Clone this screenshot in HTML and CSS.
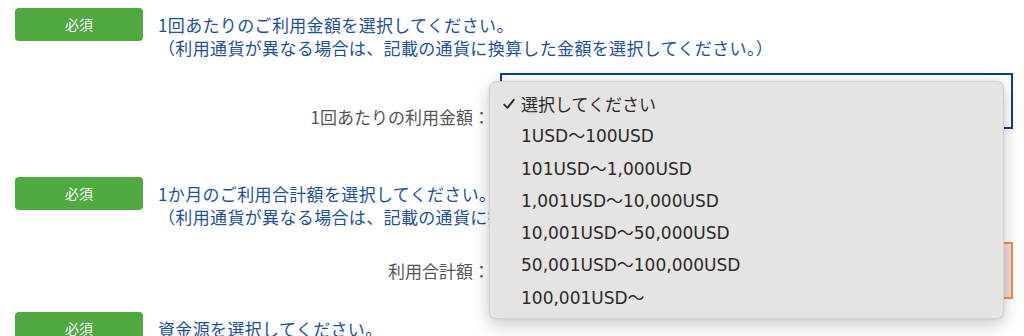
FILE: index.html
```html
<!DOCTYPE html>
<html lang="ja">
<head>
<meta charset="utf-8">
<link rel="stylesheet" href="styles.css">
</head>
<body>
<div class="page">
  <section class="q q-first">
    <div class="head">
      <span class="badge">必須</span>
      <div class="qtext">
        <p>1回あたりのご利用金額を選択してください。</p>
        <p class="note">（利用通貨が異なる場合は、記載の通貨に換算した金額を選択してください。）</p>
      </div>
    </div>
    <div class="field field-low">
      <span class="label">1回あたりの利用金額：</span>
      <div class="select select-focus"></div>
    </div>
  </section>

  <section class="q q-second">
    <div class="head">
      <span class="badge">必須</span>
      <div class="qtext">
        <p>1か月のご利用合計額を選択してください。</p>
        <p class="note">（利用通貨が異なる場合は、記載の通貨に換算した金額を選択してください。）</p>
      </div>
    </div>
    <div class="field field-mid">
      <span class="label">利用合計額：</span>
      <div class="select select-error"></div>
    </div>
  </section>

  <section class="q q-third">
    <div class="head">
      <span class="badge">必須</span>
      <div class="qtext">
        <p>資金源を選択してください。</p>
      </div>
    </div>
  </section>

  <ul class="popup">
    <li class="opt opt-checked"><svg class="check" width="12" height="12" viewBox="0 0 12 12"><path d="M1.2 6.6 L4.4 9.8 L10.8 1.8" fill="none" stroke="#2a2a2a" stroke-width="1.9" stroke-linecap="round" stroke-linejoin="round"/></svg>選択してください</li>
    <li class="opt">1USD～100USD</li>
    <li class="opt">101USD～1,000USD</li>
    <li class="opt">1,001USD～10,000USD</li>
    <li class="opt">10,001USD～50,000USD</li>
    <li class="opt">50,001USD～100,000USD</li>
    <li class="opt">100,001USD～</li>
  </ul>
</div>
</body>
</html>
```

FILE: styles.css
```css
* { box-sizing: border-box; }
html, body {
  margin: 0;
  padding: 0;
  background: #ffffff;
  height: 336px;
  overflow: hidden;
}
body {
  font-family: "Noto Sans CJK JP", "Noto Sans", sans-serif;
}
.page {
  position: relative;
  padding: 8px 11px 0 15px;
}
.q { display: flex; flex-direction: column; }
.q-second { margin-top: 48px; }
.q-third { margin-top: 13px; }

.head {
  display: flex;
  align-items: flex-start;
}
.badge {
  flex: none;
  width: 128px;
  height: 33px;
  border-radius: 4px;
  background: #4faa40;
  color: #ffffff;
  font-size: 14px;
  line-height: 33px;
  text-align: center;
}
.qtext {
  margin-left: 15px;
  margin-top: 5px;
  color: #1d4f9f;
  font-size: 17px;
  line-height: 23px;
  letter-spacing: 0.35px;
}
.qtext p { margin: 0; }

.field {
  display: flex;
  justify-content: flex-end;
  align-items: flex-start;
  margin-top: 14px;
}
.label {
  color: #555555;
  font-size: 17px;
  line-height: 24px;
  margin-right: 10px;
}
.field-low .label { margin-top: 32px; }
.field-mid .label { margin-top: 17px; }
.select {
  width: 513px;
  height: 56px;
}
.select-focus {
  background: #ffffff;
  border: 2px solid #0d3c98;
}
.select-error {
  height: 57px;
  background: #f3dcdc;
  border: 2px solid #f5913a;
}

.popup {
  position: absolute;
  left: 489px;
  top: 81px;
  width: 515px;
  height: 238px;
  margin: 0;
  padding: 6px 0 5px 0;
  list-style: none;
  background: #e5e4e2;
  border: 1px solid #d2d1cf;
  border-radius: 7px;
  box-shadow: 0 6px 18px rgba(0, 0, 0, 0.22), 0 0 3px rgba(0, 0, 0, 0.08);
}
.opt {
  position: relative;
  height: 32.3px;
  line-height: 32.3px;
  padding-left: 31px;
  color: #2a2a2a;
  font-family: "DejaVu Sans", "Noto Sans CJK JP", sans-serif;
  font-size: 17px;
}
.opt-checked { font-family: "Noto Sans CJK JP", sans-serif; }
.check {
  position: absolute;
  left: 13px;
  top: 10px;
}
```
